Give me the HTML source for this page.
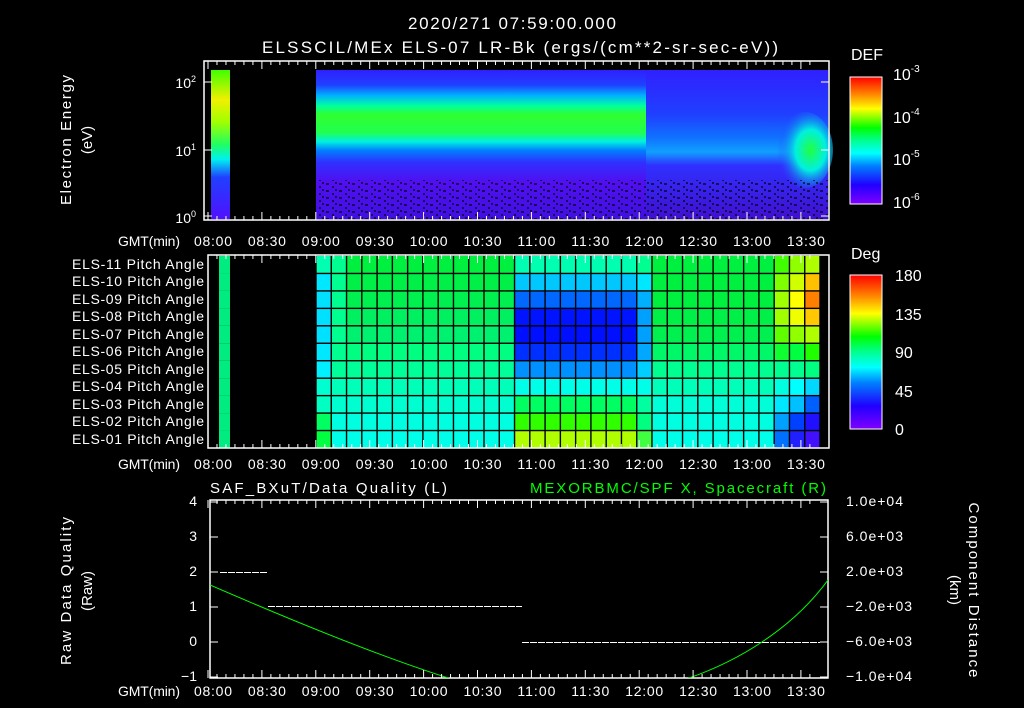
<!DOCTYPE html>
<html><head><meta charset="utf-8"><style>
html,body{margin:0;padding:0;background:#000;width:1024px;height:708px;overflow:hidden}
svg{display:block}
text{font-family:"Liberation Sans",sans-serif;fill:#fff;font-size:14px}
</style></head><body>
<svg id="s" width="1024" height="708" viewBox="0 0 1024 708" xmlns="http://www.w3.org/2000/svg">
<defs>
<linearGradient id="rb" x1="0" y1="1" x2="0" y2="0">
<stop offset="0" stop-color="#8000ff"/><stop offset="0.15" stop-color="#2000ff"/><stop offset="0.3" stop-color="#0080ff"/><stop offset="0.4" stop-color="#00ffff"/><stop offset="0.5" stop-color="#00ff90"/><stop offset="0.6" stop-color="#00ff00"/><stop offset="0.75" stop-color="#ffff00"/><stop offset="0.87" stop-color="#ff8000"/><stop offset="1" stop-color="#ff0000"/>
</linearGradient>
<linearGradient id="band" x1="0" y1="0" x2="0" y2="1">
<stop offset="0" stop-color="#3020ff"/><stop offset="0.1" stop-color="#2040ff"/><stop offset="0.17" stop-color="#00b0ff"/><stop offset="0.24" stop-color="#00ffa0"/><stop offset="0.3" stop-color="#30ff30"/><stop offset="0.42" stop-color="#20ff50"/><stop offset="0.48" stop-color="#00f0e0"/><stop offset="0.54" stop-color="#0080ff"/><stop offset="0.62" stop-color="#3030ff"/><stop offset="0.75" stop-color="#5010f0"/><stop offset="1" stop-color="#4010e0"/>
</linearGradient>
<linearGradient id="blue" x1="0" y1="0" x2="0" y2="1">
<stop offset="0" stop-color="#3020ff"/><stop offset="0.3" stop-color="#2040ff"/><stop offset="0.45" stop-color="#1070ff"/><stop offset="0.55" stop-color="#10a0ff"/><stop offset="0.64" stop-color="#3030ff"/><stop offset="1" stop-color="#4010d0"/>
</linearGradient>
<linearGradient id="left" x1="0" y1="0" x2="0" y2="1">
<stop offset="0" stop-color="#40ff00"/><stop offset="0.2" stop-color="#f0f000"/><stop offset="0.35" stop-color="#a0ff00"/><stop offset="0.5" stop-color="#20ff60"/><stop offset="0.6" stop-color="#00f0f0"/><stop offset="0.72" stop-color="#2040ff"/><stop offset="1" stop-color="#5010ff"/>
</linearGradient>
<radialGradient id="blob" cx="0.6" cy="0.5" r="0.6">
<stop offset="0" stop-color="#20ff40"/><stop offset="0.45" stop-color="#00f0e0"/><stop offset="1" stop-color="#2040ff" stop-opacity="0"/>
</radialGradient>
<pattern id="noise" width="13" height="7" patternUnits="userSpaceOnUse">
<rect x="1" y="1" width="3" height="2" fill="#000"/><rect x="7" y="4" width="2" height="2" fill="#000"/><rect x="10" y="0" width="2" height="2" fill="#000"/>
</pattern>
<clipPath id="c3"><rect x="210" y="500" width="618" height="178"/></clipPath>
</defs>

<text x="512" y="29" text-anchor="middle" style="font-size:17px" textLength="208">2020/271 07:59:00.000</text>
<text x="520" y="53" text-anchor="middle" style="font-size:17px" textLength="516">ELSSCIL/MEx ELS-07 LR-Bk  (ergs/(cm**2-sr-sec-eV))</text>

<!-- Panel 1 -->
<rect x="211" y="70" width="19" height="149" fill="url(#left)"/>
<rect x="316" y="70" width="330" height="149" fill="url(#band)"/>
<rect x="646" y="70" width="144" height="149" fill="url(#blue)"/>
<rect x="790" y="70" width="38" height="149" fill="url(#blue)"/>
<ellipse cx="805" cy="150" rx="28" ry="38" fill="url(#blob)"/>
<rect x="318" y="180" width="510" height="39" fill="url(#noise)" opacity="0.6"/>
<rect x="204" y="61" width="625" height="159" fill="none" stroke="#fff" stroke-width="1.5"/>
<text x="196" y="88" text-anchor="end">10<tspan dy="-6" style="font-size:9px">2</tspan></text>
<text x="196" y="156" text-anchor="end">10<tspan dy="-6" style="font-size:9px">1</tspan></text>
<text x="196" y="223" text-anchor="end">10<tspan dy="-6" style="font-size:9px">0</tspan></text>
<text transform="translate(71,140) rotate(-90)" text-anchor="middle" style="font-size:15px" textLength="130">Electron Energy</text>
<text transform="translate(92,140) rotate(-90)" text-anchor="middle" style="font-size:15px">(eV)</text>
<text x="851" y="60" style="font-size:16px">DEF</text>
<rect x="850" y="77" width="32" height="127" fill="url(#rb)" stroke="#fff"/>
<text x="893" y="80" style="font-size:16px">10<tspan dy="-8" style="font-size:10px">-3</tspan></text>
<text x="893" y="123" style="font-size:16px">10<tspan dy="-8" style="font-size:10px">-4</tspan></text>
<text x="893" y="165" style="font-size:16px">10<tspan dy="-8" style="font-size:10px">-5</tspan></text>
<text x="893" y="208" style="font-size:16px">10<tspan dy="-8" style="font-size:10px">-6</tspan></text>

<!-- Panel 2 -->
<g id="grid"></g>
<rect x="208" y="255" width="621" height="193" fill="none" stroke="#fff" stroke-width="1.5"/>
<g id="plab" text-anchor="end">
<text x="204" y="269" textLength="132">ELS-11 Pitch Angle</text>
<text x="204" y="286" textLength="132">ELS-10 Pitch Angle</text>
<text x="204" y="304" textLength="132">ELS-09 Pitch Angle</text>
<text x="204" y="321" textLength="132">ELS-08 Pitch Angle</text>
<text x="204" y="339" textLength="132">ELS-07 Pitch Angle</text>
<text x="204" y="356" textLength="132">ELS-06 Pitch Angle</text>
<text x="204" y="374" textLength="132">ELS-05 Pitch Angle</text>
<text x="204" y="391" textLength="132">ELS-04 Pitch Angle</text>
<text x="204" y="409" textLength="132">ELS-03 Pitch Angle</text>
<text x="204" y="426" textLength="132">ELS-02 Pitch Angle</text>
<text x="204" y="444" textLength="132">ELS-01 Pitch Angle</text>
</g>
<text x="851" y="259" style="font-size:16px">Deg</text>
<rect x="850" y="275" width="32" height="154" fill="url(#rb)" stroke="#fff"/>
<text x="895" y="281" style="font-size:16px">180</text>
<text x="895" y="320" style="font-size:16px">135</text>
<text x="895" y="358" style="font-size:16px">90</text>
<text x="895" y="397" style="font-size:16px">45</text>
<text x="895" y="435" style="font-size:16px">0</text>

<!-- Panel 3 -->
<text x="210" y="493" style="font-size:15px" textLength="237">SAF_BXuT/Data Quality (L)</text>
<text x="530" y="493" style="font-size:15px;fill:#00ff00" textLength="296">MEXORBMC/SPF X, Spacecraft (R)</text>
<rect x="210" y="500" width="618" height="178" fill="none" stroke="#fff" stroke-width="1.5"/>
<g text-anchor="end">
<text x="197" y="506">4</text><text x="197" y="541">3</text><text x="197" y="576">2</text><text x="197" y="611">1</text><text x="197" y="646">0</text><text x="197" y="681">−1</text>
</g>
<g style="font-size:12px">
<text x="846" y="506" textLength="57">1.0e+04</text><text x="846" y="541" textLength="57">6.0e+03</text><text x="846" y="576" textLength="57">2.0e+03</text><text x="846" y="611" textLength="66">−2.0e+03</text><text x="846" y="646" textLength="66">−6.0e+03</text><text x="846" y="681" textLength="66">−1.0e+04</text>
</g>
<text transform="translate(71,591) rotate(-90)" text-anchor="middle" style="font-size:15px" textLength="148">Raw Data Quality</text>
<text transform="translate(92,591) rotate(-90)" text-anchor="middle" style="font-size:15px">(Raw)</text>
<text transform="translate(969,590) rotate(90)" text-anchor="middle" style="font-size:15px" textLength="175">Component Distance</text>
<text transform="translate(950,590) rotate(90)" text-anchor="middle" style="font-size:15px">(km)</text>
<g stroke="#fff" stroke-width="1" shape-rendering="crispEdges">
<line x1="220" y1="572.5" x2="268" y2="572.5" stroke-dasharray="7 1"/>
<line x1="268" y1="606.5" x2="522" y2="606.5" stroke-dasharray="7 1"/>
<line x1="522" y1="642.5" x2="820" y2="642.5" stroke-dasharray="7 1"/>
</g>
<g clip-path="url(#c3)" stroke="#00ff00" fill="none" stroke-width="1">
<path d="M210,585 C300,624 400,665 475,686"/>
<path d="M670,684 C740,664 795,625 828,580"/>
</g>
<g id="ticks" stroke="#fff" stroke-width="1"></g>
<g id="tl"></g>
</svg>
<script>
var NS="http://www.w3.org/2000/svg",g=document.getElementById('grid');
function R(p,x,y,w,h,f){var r=document.createElementNS(NS,'rect');r.setAttribute('x',x);r.setAttribute('y',y);r.setAttribute('width',w);r.setAttribute('height',h);r.setAttribute('fill',f);p.appendChild(r);}
var N=['#00f040','#00f048','#00f050','#00f060','#00f070','#00ff80','#00ff98','#00ffb8','#00ffd0','#00ffe0','#00ffe8'];
var N2=['#00f040','#00f040','#00f040','#00f048','#00f050','#00f868','#00ff90','#00ffb8','#00ffd8','#00ffe0','#00ffe8'];
var B=['#00ffb0','#00c8ff','#0068ff','#0014ff','#0010ff','#0030ff','#0090ff','#00ffe8','#00ff60','#30ff00','#b0ff00'];
var T=['#00ff90','#00e8ff','#00b0ff','#00a0ff','#00a0ff','#00a8ff','#00d0ff','#00ffe8','#00ffa0','#00ff80','#40ff40'];
var C0=['#00ffb0','#00e8ff','#00e0ff','#00e0ff','#00e0ff','#00e8ff','#00f0ff','#00ffd0','#00ffc0','#00ff60','#00ff40'];
var C30=['#40ff00','#80ff00','#a0ff00','#a0ff00','#60ff00','#10ff30','#00ff90','#00ffe0','#00e8ff','#00a0ff','#0070ff'];
var C31=['#90ff00','#d0ff00','#ffff00','#f0ff00','#90ff00','#00ff40','#00ff90','#00ffff','#00c0ff','#0040ff','#2020ff'];
var C32=['#b0ff00','#ffc000','#ff8000','#ffc800','#b0ff00','#20ff00','#00ff80','#00d8ff','#0060ff','#2010ff','#4010ff'];
var y0=256,rh=192/11,cw=504/33;
for(var r=0;r<11;r++){R(g,219,y0+r*rh,11,rh,'#00ec80');}
for(var i=0;i<33;i++){var c;
 if(i==0)c=C0;else if(i==1)c=N.map(function(v,k){return k<6?'#00ff90':v});
 else if(i<=12)c=N;else if(i<=20)c=B;else if(i==21)c=T;else if(i<=29)c=N2;else if(i==30)c=C30;else if(i==31)c=C31;else c=C32;
 for(var r=0;r<11;r++)R(g,316+i*cw,y0+r*rh,cw+0.5,rh+0.5,c[r]);}
for(var i=0;i<=33;i++)R(g,316+i*cw-0.7,256,1.4,192,'#000');
for(var r=1;r<11;r++)R(g,316,y0+r*rh-0.7,504,1.4,'#000');
var tk=document.getElementById('ticks'),tl=document.getElementById('tl');
function L(x1,y1,x2,y2){var l=document.createElementNS(NS,'line');l.setAttribute('x1',x1);l.setAttribute('y1',y1);l.setAttribute('x2',x2);l.setAttribute('y2',y2);tk.appendChild(l);}
var lab=['08:00','08:30','09:00','09:30','10:00','10:30','11:00','11:30','12:00','12:30','13:00','13:30'];
[[61,220,246],[255,448,469],[500,678,696]].forEach(function(p){
 for(var m=0;m<=67;m++){var x=208+m*53.9/6;if(x>828)break;var big=m%6==0;L(x,p[0],x,p[0]+(big?8:4));L(x,p[1],x,p[1]-(big?8:4));}
 lab.forEach(function(s,k){var t=document.createElementNS(NS,'text');t.setAttribute('x',213+k*53.9);t.setAttribute('y',p[2]);t.setAttribute('text-anchor','middle');t.setAttribute('textLength','38');t.textContent=s;tl.appendChild(t);});
 var t=document.createElementNS(NS,'text');t.setAttribute('x',118);t.setAttribute('y',p[2]);t.setAttribute('textLength','62');t.textContent='GMT(min)';tl.appendChild(t);
});
[82,150,216].forEach(function(y){L(204,y,212,y);L(829,y,821,y);});
for(var v=0;v<6;v++){var y=502+v*35;L(210,y,218,y);L(828,y,820,y);}
</script>
</body></html>
